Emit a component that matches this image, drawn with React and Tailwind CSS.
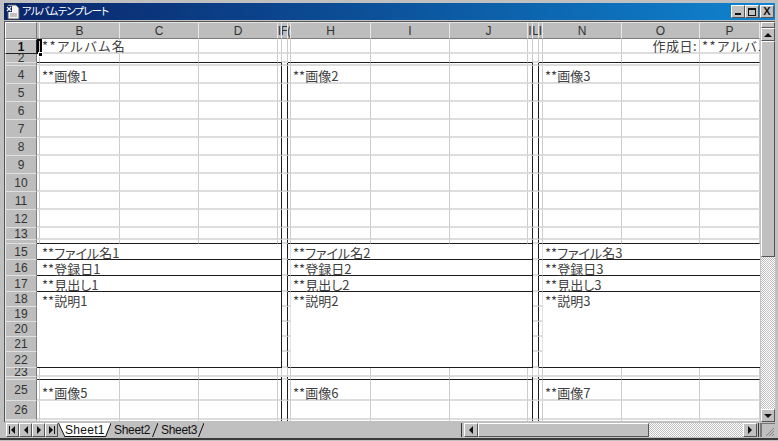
const cols = [
  ["A", ""], ["B", "B"], ["C", "C"], ["D", "D"], ["E", "I"], ["F", "F"], ["G", "("], ["H", "H"],
  ["I", "I"], ["J", "J"], ["K", "I"], ["L", "L"], ["M", "I"], ["N", "N"], ["O", "O"], ["P", "P"],
];
const rows = [1, 2, 3, 4, 5, 6, 7, 8, 9, 10, 11, 12, 13, 14, 15, 16, 17, 18, 19, 20, 21, 22, 23, 24, 25, 26, 27];

const hiddenLabels = [3, 14, 24, 27];
const blackBottom = [2, 14, 15, 16, 17, 22, 24];
const merged = [15, 16, 17, 18, 19, 20, 21, 22];
const boxRows = [3, 4, 5, 6, 7, 8, 9, 10, 11, 12, 13, 14, 15, 16, 17, 18, 19, 20, 21, 22, 24, 25, 26, 27];

const cellText = {
  "B1": "**アルバム名",
  "B4": "**画像1", "H4": "**画像2", "N4": "**画像3",
  "B15": "**ファイル名1", "H15": "**ファイル名2", "N15": "**ファイル名3",
  "B16": "**登録日1", "H16": "**登録日2", "N16": "**登録日3",
  "B17": "**見出し1", "H17": "**見出し2", "N17": "**見出し3",
  "B18": "**説明1", "H18": "**説明2", "N18": "**説明3",
  "B25": "**画像5", "H25": "**画像6", "N25": "**画像7",
  "P1": "**アルバム名",
};

function cellClass(col, row) {
  const gap = col === "F" || col === "L";
  const boxEnd = col === "E" || col === "K";
  const inBox = boxRows.includes(row);
  let bottom = "border-b-2 border-b-[#dddddd]";
  if (blackBottom.includes(row) && !gap) bottom = "border-b border-b-[#1c1c1c]";
  else if (merged.includes(row) && !gap && col !== "G" && col !== "M") bottom = "";
  let right = "border-r border-r-[#cccccc]";
  if ((boxEnd || gap) && inBox) right = "border-r border-r-[#1c1c1c]";
  else if (merged.includes(row) && !boxEnd && !gap) {
    right = col === "G" || col === "M" ? "border-r border-r-[#e2e2e2]" : "";
  }
  return `${bottom} ${right}`;
}

// text sits a little low in the taller rows
function rowPad(row) {
  if (row === 4) return "pt-[3px]";
  if (row === 25) return "pt-[5px]";
  if (row === 1) return "";
  return "pt-[1px]";
}

function Arrow({ dir, className = "" }) {
  const points = { up: "0,5 4,1 8,5", down: "0,1 8,1 4,5", left: "5,0 5,8 1,4", right: "1,0 1,8 5,4" }[dir];
  const size = dir === "up" || dir === "down" ? "w-2 h-[6px]" : "w-[6px] h-2";
  const box = dir === "up" || dir === "down" ? "0 0 8 6" : "0 0 6 8";
  return (
    <svg viewBox={box} className={`${size} ${className}`}>
      <polygon points={points} fill="#111" />
    </svg>
  );
}

function Raised({ className = "", children }) {
  return (
    <div className={`flex items-center justify-center bg-[#c0c0c0] border-t border-l border-t-white border-l-white border-r border-b border-r-[#555] border-b-[#555] ${className}`}>
      {children}
    </div>
  );
}

function AppIcon() {
  return (
    <svg viewBox="0 0 16 16" className="w-4 h-4 shrink-0">
      <path d="M3 1h8l3 3v11H3z" fill="#f4f4f4" stroke="#555" />
      <path d="M1 2h6v6H1z" fill="#0a246a" />
      <path d="M2 3l4 4M6 3l-4 4" stroke="#fff" strokeWidth="1.2" />
      <path d="M5 10h7M5 12h7" stroke="#8a8a8a" />
    </svg>
  );
}

function WinButton({ children }) {
  return <Raised className="w-[14px] h-[13px]">{children}</Raised>;
}

function Sheet() {
  return (
    <div className="grid w-[755px] h-[399px] overflow-hidden bg-white grid-cols-[32px_3px_80px_79px_79px_4px_6px_3px_80px_79px_78px_5px_6px_4px_79px_78px_60px] grid-rows-[17px_15px_9px_3px_18px_18px_18px_18px_18px_18px_18px_18px_18px_12px_4px_16px_16px_16px_15px_15px_15px_15px_16px_9px_3px_21px_19px_1px]">
      {/* corner */}
      <div className="bg-[#c0c0c0] border-t border-l border-t-white border-l-white border-r border-b border-r-[#7a7a7a] border-b-[#7a7a7a]" />
      {cols.map(([id, label]) => (
        <div
          key={id}
          className="flex items-center justify-center overflow-hidden bg-[#bdbdbd] border-t border-t-[#e6e6e6] border-r border-r-[#e8e8e8] border-b border-b-[#7a7a7a] text-[12px] leading-none text-[#333] font-['Liberation_Sans']"
        >
          {label}
        </div>
      ))}
      {rows.map((row) => [
        <div
          key={`h${row}`}
          className={
            row === 1
              ? "flex items-center justify-center overflow-hidden bg-[#c0c0c0] border-t border-l border-t-white border-l-white border-r border-b border-r-[#222] border-b-[#222] text-[12px] leading-none font-bold text-[#111] font-['Liberation_Sans']"
              : "flex items-center justify-center overflow-hidden bg-[#bdbdbd] border-l border-l-[#e6e6e6] border-r border-r-[#7a7a7a] border-b border-b-[#e0e0e0] text-[12px] leading-none text-[#333] font-['Liberation_Sans']"
          }
        >
          {hiddenLabels.includes(row) ? "" : row}
        </div>,
        ...cols.map(([id]) => {
          const text = cellText[`${id}${row}`];
          return (
            <div key={`${id}${row}`} className={`relative flex items-center min-w-0 pl-[2px] ${rowPad(row)} ${cellClass(id, row)}`}>
              {id === "A" && row === 1 && (
                <div className="absolute z-10 left-0 top-0 w-[5px] h-[15px] border-2 border-black">
                  <div className="absolute -left-[1px] top-[11px] w-[5px] h-[5px] bg-black border border-white" />
                </div>
              )}
              {id === "O" && row === 1 && (
                <span className="ml-auto pr-[2px] whitespace-nowrap text-[13px] leading-none tracking-[0.5px] text-[#404040]">作成日:</span>
              )}
              {text && (
                <span className={`relative z-[1] whitespace-nowrap text-[13px] leading-none text-[#404040] [font-feature-settings:'palt'] ${row === 1 ? "tracking-[1.5px]" : "tracking-[0px]"}`}>{text}</span>
              )}
            </div>
          );
        }),
      ])}
    </div>
  );
}

function VerticalScroll() {
  return (
    <div className="flex flex-col w-[14px] h-[400px] ml-[1px]">
      <Raised className="w-full h-[6px]" />
      <Raised className="w-full h-[13px]"><Arrow dir="up" /></Raised>
      <Raised className="w-full h-[216px]" />
      <div className="flex-1 bg-[repeating-conic-gradient(#ffffff_0_25%,#c0c0c0_0_50%)] bg-size-[2px_2px]" />
      <Raised className="w-full h-[13px]"><Arrow dir="down" /></Raised>
    </div>
  );
}

function Tabs() {
  return (
    <div className="flex h-[14px] w-[398px] items-stretch text-[12px] leading-none text-[#111] font-['Liberation_Sans']">
      <div className="flex pl-[1px]">
        {["first", "prev", "next", "last"].map((k) => (
          <Raised key={k} className="w-[13px] h-[14px]">
            {k === "first" && <span className="flex items-center"><span className="w-[1px] h-2 bg-[#111]" /><Arrow dir="left" /></span>}
            {k === "prev" && <Arrow dir="left" />}
            {k === "next" && <Arrow dir="right" />}
            {k === "last" && <span className="flex items-center"><Arrow dir="right" /><span className="w-[1px] h-2 bg-[#111]" /></span>}
          </Raised>
        ))}
      </div>
      <svg viewBox="0 0 7 14" className="w-[7px] h-[14px] shrink-0">
        <polygon points="0,0 7,14 7,0" fill="#fff" />
        <line x1="0.5" y1="0" x2="7" y2="14" stroke="#111" />
      </svg>
      <div className="flex items-center w-[40px] bg-white border-b border-b-[#111] tracking-[0.3px]">Sheet1</div>
      <svg viewBox="0 0 6 14" className="w-[6px] h-[14px] shrink-0">
        <polygon points="0,0 6,0 0,14" fill="#fff" />
        <line x1="6" y1="0" x2="0.5" y2="14" stroke="#111" />
      </svg>
      <div className="flex items-center pl-[3px] w-[41px] tracking-[-0.3px]">Sheet2</div>
      <svg viewBox="0 0 6 14" className="w-[6px] h-[14px] shrink-0">
        <line x1="6" y1="0" x2="0.5" y2="14" stroke="#111" />
      </svg>
      <div className="flex items-center pl-[3px] w-[40px] tracking-[-0.3px]">Sheet3</div>
      <svg viewBox="0 0 6 14" className="w-[6px] h-[14px] shrink-0">
        <line x1="6" y1="0" x2="0.5" y2="14" stroke="#111" />
      </svg>
    </div>
  );
}

function BottomBar() {
  return (
    <div className="flex items-stretch h-[14px] mt-[1px]">
      <Tabs />
      <div className="flex-1" />
      <div className="w-[1px] bg-[#333] mr-[2px]" />
      <Raised className="w-[14px] h-[14px]"><Arrow dir="left" /></Raised>
      <Raised className="w-[171px] h-[14px]" />
      <div className="w-[94px] bg-[repeating-conic-gradient(#ffffff_0_25%,#c0c0c0_0_50%)] bg-size-[2px_2px]" />
      <Raised className="w-[14px] h-[14px]"><Arrow dir="right" /></Raised>
      <div className="w-[1px] ml-[1px] bg-[#333]" />
      <div className="w-[1px] ml-[1px] bg-[#777]" />
      <div className="w-[14px] flex items-end justify-end border-l border-t border-[#777]">
        <svg viewBox="0 0 12 12" className="w-3 h-3">
          <path d="M11 3L3 11M11 6L6 11M11 9L9 11" stroke="#808080" />
        </svg>
      </div>
    </div>
  );
}

export default function App() {
  return (
    <div className="w-[778px] h-[441px] overflow-hidden bg-[#c0c0c0] font-['Noto_Sans_CJK_JP','Liberation_Sans',sans-serif]">
      <div className="flex flex-col h-[440px] pl-[5px] pr-[3px] pt-[3px] border-b-2 border-b-[#3a3a3a]">
        {/* title bar */}
        <div className="flex items-center h-[17px] -ml-[1px] pl-[1px] pr-[1px] gap-[1px] bg-linear-to-r from-[#0a246a] to-[#1084d0]">
          <AppIcon />
          <span className="text-[10.5px] leading-none tracking-[-0.9px] text-white [font-feature-settings:'palt']">アルバムテンプレート</span>
          <div className="flex ml-auto">
            <WinButton><span className="w-[6px] h-[2px] bg-[#111] self-end mb-[2px]" /></WinButton>
            <WinButton><span className="w-2 h-2 border border-[#111] border-t-2" /></WinButton>
            <div className="ml-[1px]">
              <WinButton><span className="text-[11px] leading-none font-bold text-[#111] font-['Liberation_Sans']">X</span></WinButton>
            </div>
          </div>
        </div>
        {/* sheet + vertical scrollbar */}
        <div className="flex mt-[1px] -ml-[1px] border-t border-l border-[#555]">
          <Sheet />
          <VerticalScroll />
        </div>
        <BottomBar />
      </div>
    </div>
  );
}
